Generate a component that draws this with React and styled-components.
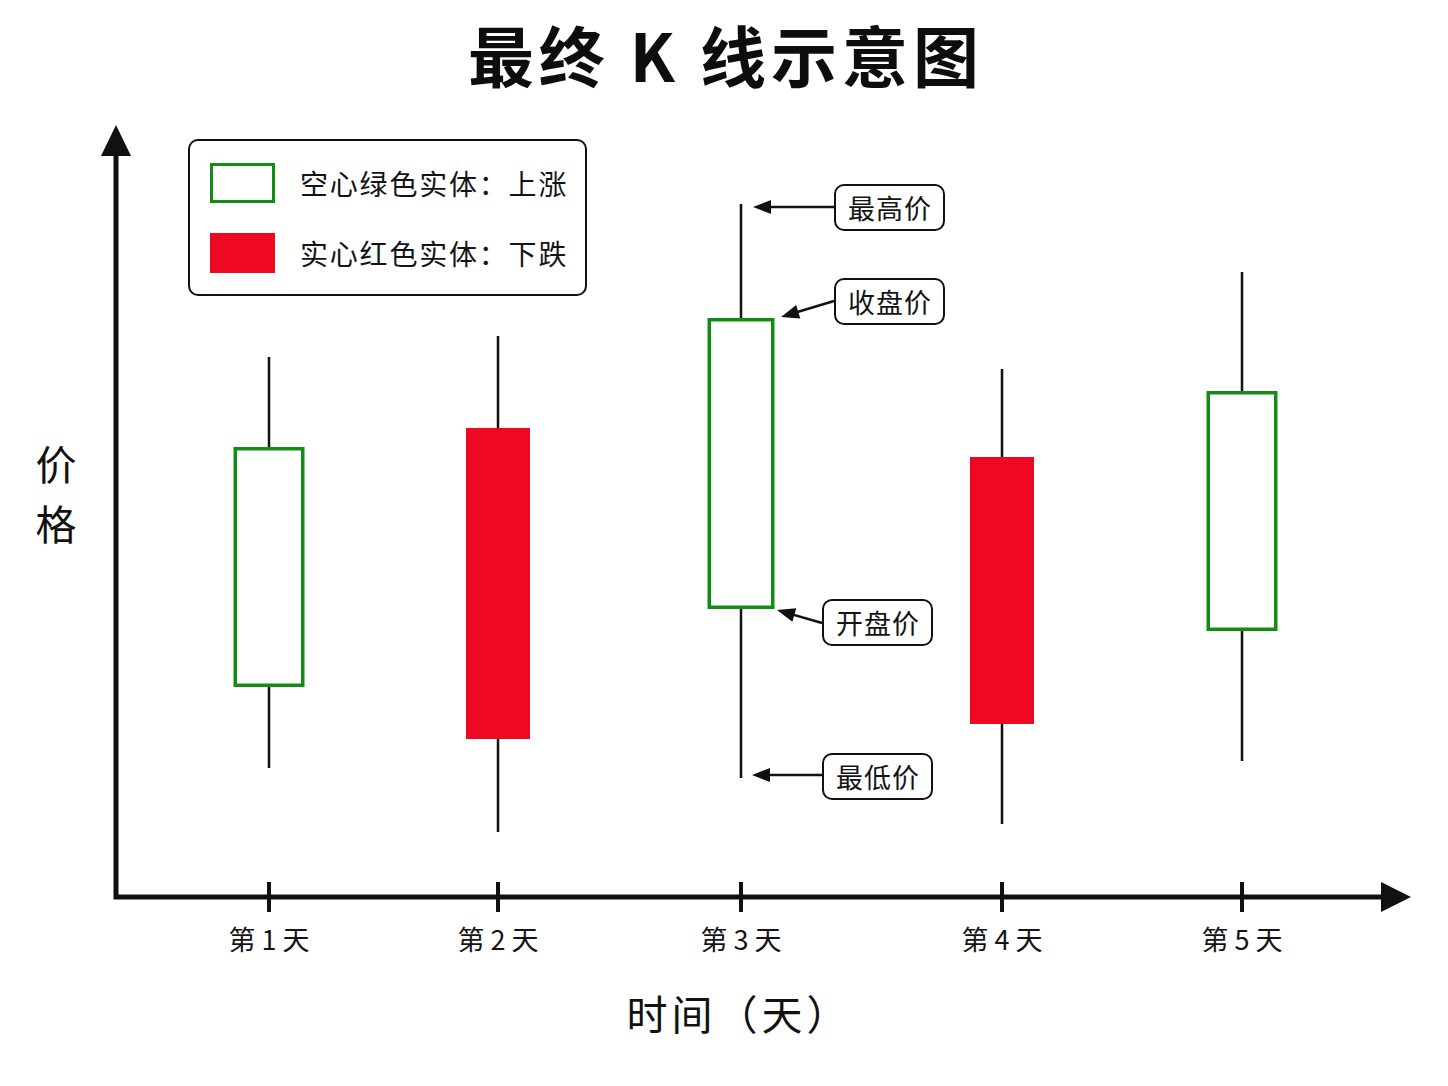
import React from "react"
import styled, { createGlobalStyle } from "styled-components"

const GlobalStyle = createGlobalStyle`
  html, body {
    margin: 0;
    padding: 0;
    background: #ffffff;
  }
  body {
    font-family: "Noto Sans CJK SC", "Noto Sans", sans-serif;
    color: #111;
  }
`

const GREEN = "#128c12"
const RED = "#ee0822"
const INK = "#111111"

// chart canvas sits below the title and right of the y label;
// the svg viewBox uses page pixels so the numbers below read straight off the picture
const CANVAS_X = 100
const CANVAS_Y = 110

const candles = [
  { day: 1, x: 269, high: 357, low: 768, top: 447, bottom: 687, up: true, w: 71 },
  { day: 2, x: 498, high: 336, low: 832, top: 428, bottom: 739, up: false, w: 64 },
  { day: 3, x: 741, high: 204, low: 778, top: 318, bottom: 609, up: true, w: 67 },
  { day: 4, x: 1002, high: 369, low: 824, top: 457, bottom: 724, up: false, w: 64 },
  { day: 5, x: 1242, high: 272, low: 761, top: 391, bottom: 631, up: true, w: 71 },
]

const callouts = [
  { label: "最高价", x: 834, y: 184, from: [834, 207], to: [753, 207] },
  { label: "收盘价", x: 834, y: 278, from: [834, 301], to: [781, 317] },
  { label: "开盘价", x: 822, y: 599, from: [822, 623], to: [777, 610] },
  { label: "最低价", x: 822, y: 753, from: [822, 775], to: [752, 775] },
]

const Page = styled.div`
  width: 1448px;
  height: 1086px;
  display: flex;
  flex-direction: column;
  overflow: hidden;
`

const Title = styled.h1`
  margin: 0;
  height: ${CANVAS_Y}px;
  display: flex;
  align-items: center;
  justify-content: center;
  padding: 0 0 4px 4px;
  box-sizing: border-box;
  font-size: 66px;
  font-weight: 700;
  letter-spacing: 5px;
  white-space: pre;
  color: #0d0d0d;
`

const ChartRow = styled.div`
  display: flex;
  height: 860px;
`

const YLabel = styled.div`
  width: ${CANVAS_X}px;
  padding: 322px 0 0 12px;
  box-sizing: border-box;
  display: flex;
  flex-direction: column;
  align-items: center;
  font-size: 41px;
  line-height: 60px;
`

const Canvas = styled.div`
  position: relative;
  flex: 1;

  svg {
    display: block;
  }
`

const Legend = styled.div`
  position: absolute;
  left: ${188 - CANVAS_X}px;
  top: ${139 - CANVAS_Y}px;
  width: 399px;
  height: 157px;
  box-sizing: border-box;
  border: 2px solid ${INK};
  border-radius: 10px;
  background: #fff;
  padding: 22px 0 0 20px;
  display: flex;
  flex-direction: column;
  gap: 30px;
`

const LegendRow = styled.div`
  display: flex;
  align-items: center;
  gap: 25px;
  height: 40px;
`

const Swatch = styled.span`
  width: 65px;
  height: 40px;
  box-sizing: border-box;
  border: ${p => (p.$filled ? "none" : `3.5px solid ${GREEN}`)};
  background: ${p => (p.$filled ? RED : "#fff")};
`

const LegendText = styled.span`
  font-size: 28px;
  letter-spacing: 1.8px;
  line-height: 40px;
  color: #141414;
`

const Callout = styled.div`
  position: absolute;
  left: ${p => p.$x - CANVAS_X}px;
  top: ${p => p.$y - CANVAS_Y}px;
  width: 111px;
  height: 47px;
  box-sizing: border-box;
  border: 2px solid ${INK};
  border-radius: 10px;
  background: #fff;
  display: flex;
  align-items: center;
  justify-content: center;
  padding-left: 1px;
  font-size: 27px;
  letter-spacing: 1px;
  color: #141414;
`

const XLabel = styled.div`
  flex: 1;
  display: flex;
  justify-content: center;
  padding: 17px 0 0 30px;
  box-sizing: border-box;
  font-size: 41px;
  letter-spacing: 4px;
  line-height: 50px;
`

const head = (from, to, len = 18, half = 7) => {
  const dx = to[0] - from[0]
  const dy = to[1] - from[1]
  const d = Math.hypot(dx, dy)
  const ux = dx / d
  const uy = dy / d
  const bx = to[0] - ux * len
  const by = to[1] - uy * len
  return `${to[0]},${to[1]} ${bx - uy * half},${by + ux * half} ${bx + uy * half},${by - ux * half}`
}

const Chart = () => (
  <svg width="1348" height="860" viewBox={`${CANVAS_X} ${CANVAS_Y} 1348 860`}>
    {/* axes */}
    <polyline points="116,152 116,897 1386,897" fill="none" stroke={INK} strokeWidth="5" />
    <polygon points="116,125 101,156 131,156" fill={INK} />
    <polygon points="1411,897 1381,882 1381,912" fill={INK} />

    {candles.map(c => (
      <g key={c.day}>
        <line x1={c.x} y1={882} x2={c.x} y2={912} stroke={INK} strokeWidth="4" />
        <text
          x={c.x}
          y={950}
          textAnchor="middle"
          fontSize="27"
          fontFamily='"Noto Sans CJK SC", sans-serif'
          fill="#141414"
        >
          {`第 ${c.day} 天`}
        </text>

        <line x1={c.x} y1={c.high} x2={c.x} y2={c.low} stroke={INK} strokeWidth="2.5" />
        {c.up ? (
          <rect
            x={c.x - c.w / 2 + 1.75}
            y={c.top + 1.75}
            width={c.w - 3.5}
            height={c.bottom - c.top - 3.5}
            fill="#fff"
            stroke={GREEN}
            strokeWidth="3.5"
          />
        ) : (
          <rect x={c.x - c.w / 2} y={c.top} width={c.w} height={c.bottom - c.top} fill={RED} />
        )}
      </g>
    ))}

    {callouts.map(a => (
      <g key={a.label}>
        <line
          x1={a.from[0]}
          y1={a.from[1]}
          x2={a.to[0] + (a.from[0] - a.to[0]) * 0.2}
          y2={a.to[1] + (a.from[1] - a.to[1]) * 0.2}
          stroke={INK}
          strokeWidth="2.5"
        />
        <polygon points={head(a.from, a.to)} fill={INK} />
      </g>
    ))}
  </svg>
)

export default function App() {
  return (
    <>
      <GlobalStyle />
      <Page>
        <Title>最终 K 线示意图</Title>
        <ChartRow>
          <YLabel>
            <span>价</span>
            <span>格</span>
          </YLabel>
          <Canvas>
            <Chart />
            <Legend>
              <LegendRow>
                <Swatch />
                <LegendText>空心绿色实体：上涨</LegendText>
              </LegendRow>
              <LegendRow>
                <Swatch $filled />
                <LegendText>实心红色实体：下跌</LegendText>
              </LegendRow>
            </Legend>
            {callouts.map(a => (
              <Callout key={a.label} $x={a.x} $y={a.y}>
                {a.label}
              </Callout>
            ))}
          </Canvas>
        </ChartRow>
        <XLabel>时间（天）</XLabel>
      </Page>
    </>
  )
}
